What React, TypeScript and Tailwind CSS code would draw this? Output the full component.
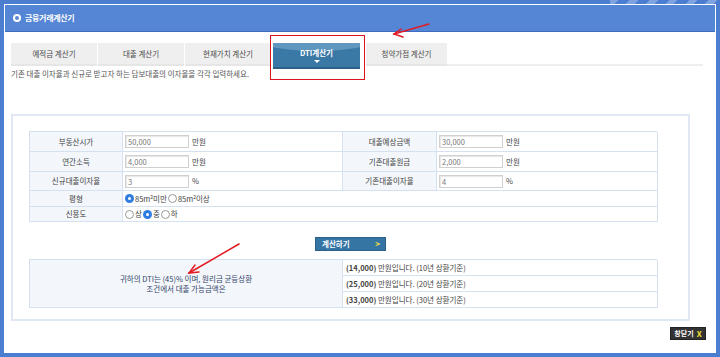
const font = "font-['Noto_Sans_CJK_KR','Noto_Sans',sans-serif]";

function Radio({ checked }: { checked?: boolean }) {
  return checked ? (
    <span className="inline-flex items-center justify-center w-[9px] h-[9px] rounded-full bg-[#2f7de1]">
      <span className="w-[3px] h-[3px] rounded-full bg-white" />
    </span>
  ) : (
    <span className="inline-block w-[9px] h-[9px] rounded-full border border-[#999] bg-white" />
  );
}

function Field({ value, unit }: { value: string; unit: string }) {
  return (
    <div className="flex items-center gap-[3px] pl-[2px]">
      <span className="w-[64px] h-[13px] border border-[#d0d0d0] shadow-[inset_1px_1px_1px_#e6e6e6] bg-white text-[#777] pl-[2px] leading-[11px]">
        {value}
      </span>
      <span className="text-[#444]">{unit}</span>
    </div>
  );
}

const tabs = ["예적금 계산기", "대출 계산기", "현재가치 계산기"];

const results = [
  ["14,000", "10년"],
  ["25,000", "20년"],
  ["33,000", "30년"],
];

export default function App() {
  const label = "bg-[#f3f6fa] border-b border-r border-[#d5e1f1] flex items-center justify-center text-[#444]";
  const cell = "border-b border-r border-[#d5e1f1] flex items-center";

  return (
    <div className={`relative w-[720px] h-[357px] bg-[#4b7dd0] p-[4px] text-[7.5px] ${font}`}>
      {/* striped corner of the window frame */}
      <div className="absolute right-0 top-0 w-[110px] h-[4px] bg-[repeating-linear-gradient(135deg,#7fa3e0_0_6px,#4b7dd0_6px_14px)]" />

      <div className="h-full bg-white p-px">
        {/* header */}
        <div className="h-[27px] bg-[#5585d5] border-b border-[#3d6cc0] flex items-center pl-[8px] gap-[4px]">
          <span className="w-[8px] h-[8px] rounded-full border-2 border-white" />
          <span className="text-white font-bold text-[8px] tracking-[-0.3px]">금융거래계산기</span>
        </div>

        <div className="pl-[6px] pr-[12px]">
          {/* tabs */}
          <div className="mt-[11px] flex items-start">
            {tabs.map((t) => (
              <div
                key={t}
                className="w-[86px] h-[23px] mr-px bg-[#efefef] border-b-2 border-[#e6e6e6] flex items-center justify-center text-[#4a4a4a]"
              >
                {t}
              </div>
            ))}
            <div className="ml-[1px] w-[87px] h-[26px] bg-[#3a79a5] border-b-2 border-[#2c6088] flex flex-col items-center justify-center relative overflow-hidden">
              <span className="absolute -top-[10px] left-[-10px] right-[-10px] h-[18px] rounded-[50%] bg-[#5f97bf]" />
              <span className="relative text-white font-bold">DTI계산기</span>
              <span className="relative mt-[2px] w-0 h-0 border-l-[3px] border-r-[3px] border-t-[3px] border-l-transparent border-r-transparent border-t-white" />
            </div>
            <div className="ml-[6px] w-[81px] h-[23px] bg-[#efefef] border-b-2 border-[#e6e6e6] flex items-center justify-center text-[#4a4a4a]">
              청약가점 계산기
            </div>
            <div className="flex-1 h-[23px] border-b-2 border-[#eeeeee]" />
          </div>

          <p className="text-[#555] leading-[10px]">
            기존 대출 이자율과 신규로 받고자 하는 담보대출의 이자율을 각각 입력하세요.
          </p>

          {/* panel */}
          <div className="mt-[35px] w-[679px] h-[207px] border-2 border-[#dfe8f4] pt-[15px] pl-[16px]">
            <div className="w-[628px] grid grid-cols-[93px_220px_94px_221px] border-t border-l border-[#d5e1f1]">
              <div className={`${label} h-[20px]`}>부동산시가</div>
              <div className={`${cell} h-[20px]`}><Field value="50,000" unit="만원" /></div>
              <div className={`${label} h-[20px]`}>대출예상금액</div>
              <div className={`${cell} h-[20px]`}><Field value="30,000" unit="만원" /></div>

              <div className={`${label} h-[20px]`}>연간소득</div>
              <div className={`${cell} h-[20px]`}><Field value="4,000" unit="만원" /></div>
              <div className={`${label} h-[20px]`}>기존대출원금</div>
              <div className={`${cell} h-[20px]`}><Field value="2,000" unit="만원" /></div>

              <div className={`${label} h-[19px]`}>신규대출이자율</div>
              <div className={`${cell} h-[19px]`}><Field value="3" unit="%" /></div>
              <div className={`${label} h-[19px]`}>기존대출이자율</div>
              <div className={`${cell} h-[19px]`}><Field value="4" unit="%" /></div>

              <div className={`${label} h-[16px]`}>평형</div>
              <div className={`${cell} col-span-3 h-[16px] pl-[2px] gap-[1px] text-[#444]`}>
                <Radio checked />
                <span>
                  85m<sup className="text-[5px]">2</sup>미만
                </span>
                <Radio />
                <span>
                  85m<sup className="text-[5px]">2</sup>이상
                </span>
              </div>

              <div className={`${label} h-[15px]`}>신용도</div>
              <div className={`${cell} col-span-3 h-[15px] pl-[2px] gap-[1px] text-[#444]`}>
                <Radio />
                <span>상</span>
                <Radio checked />
                <span>중</span>
                <Radio />
                <span>하</span>
              </div>
            </div>

            <div className="mt-[15px] ml-[286px] w-[71px] h-[14px] bg-[#3575a3] border border-[#2b5f86] flex items-center justify-between pl-[6px] pr-[5px]">
              <span className="text-white font-bold">계산하기</span>
              <span className="text-[#f4e23a] font-bold text-[8px] leading-none">&gt;</span>
            </div>

            <div className="mt-[8px] w-[628px] grid grid-cols-[313px_315px] border-t border-l border-[#d5e1f1]">
              <div className="row-span-3 bg-[#f3f6fa] border-b border-r border-[#d5e1f1] flex flex-col items-center justify-center text-[#34466b] leading-[10px]">
                <span>귀하의 DTI는 (45)% 이며, 원리금 균등상환</span>
                <span>조건에서 대출 가능금액은</span>
              </div>
              {results.map(([amt, yr]) => (
                <div key={amt} className={`${cell} h-[16px] pl-[3px] text-[#444]`}>
                  <span className="font-bold">({amt})</span>
                  <span>&nbsp;만원입니다. ({yr} 상환기준)</span>
                </div>
              ))}
            </div>
          </div>

          <div className="mt-[6px] flex justify-end">
            <div className="h-[13px] w-[36px] mr-[-3px] bg-[#333] border border-[#222] flex items-center justify-center gap-[3px]">
              <span className="text-white font-bold text-[7px]">창닫기</span>
              <span className="text-[#f4e23a] font-bold text-[8px] leading-none">X</span>
            </div>
          </div>
        </div>
      </div>

      {/* annotations */}
      <div className="absolute left-[270px] top-[35px] w-[95px] h-[45px] border-[1.5px] border-[#d9141c]" />
      <svg className="absolute left-0 top-0 pointer-events-none" width="720" height="357">
        <g stroke="#e31b23" strokeWidth="1.5" fill="none" strokeLinecap="round">
          <line x1="429" y1="24" x2="394" y2="34" />
          <path d="M401 29 L394 34 L403 37" />
          <line x1="239" y1="244" x2="189" y2="273" />
          <path d="M195 265 L189 273 L199 272" />
        </g>
      </svg>
    </div>
  );
}
